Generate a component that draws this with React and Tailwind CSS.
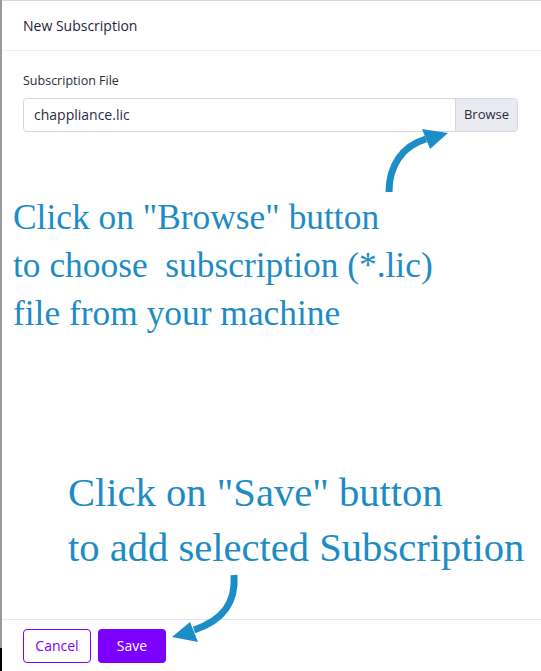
import React from 'react';

const ui = { fontFamily: '"Open Sans", "Noto Sans", sans-serif' };
const note = { fontFamily: '"Liberation Serif", "Times New Roman", serif' };

function ArrowUp() {
  return (
    <svg className="absolute left-[378px] top-[124px]" width="80" height="72" viewBox="0 0 80 72">
      <path d="M11 68 C 11 42, 24 22, 48 15" fill="none" stroke="#1b8ec8" strokeWidth="7" strokeLinecap="butt" />
      <path d="M44 5 L 70 9 L 52 25 Z" fill="#1b8ec8" />
    </svg>
  );
}

function ArrowDown() {
  return (
    <svg className="absolute left-[166px] top-[572px]" width="80" height="76" viewBox="0 0 80 76">
      <path d="M68 3 C 70 30, 58 48, 28 58" fill="none" stroke="#1b8ec8" strokeWidth="7" strokeLinecap="butt" />
      <path d="M6 65 L 24 50 L 32 70 Z" fill="#1b8ec8" />
    </svg>
  );
}

export default function App() {
  return (
    <div className="relative w-[541px] h-[671px] bg-black overflow-hidden">
      <div className="flex flex-col h-full ml-[2px] bg-white border-t border-[#d9d9e0]" style={ui}>
        <div className="h-[50px] shrink-0 flex items-center px-[21px] border-b border-[#eceef2] text-[14px] text-[#1f1d3a]">
          New Subscription
        </div>

        <div className="flex-1 min-h-0 flex flex-col pt-[21px] px-[21px]">
          <label className="text-[12.5px] text-[#2b2a3f] mb-[8px]">Subscription File</label>
          <div className="flex h-[34px] -mt-[1px] border border-[#d5d8de] rounded-[4px] overflow-hidden w-[495px]">
            <div className="flex-1 flex items-center px-[10px] text-[14px] text-[#2b2a3f]">chappliance.lic</div>
            <div className="w-[62px] flex items-center justify-center bg-[#e9ebf0] border-l border-[#d5d8de] text-[13px] text-[#2b2a3f]">
              Browse
            </div>
          </div>

          <div className="mt-[61px] -ml-[10px] whitespace-pre text-[35.4px] leading-[48px] text-[#1e8cc4]" style={note}>
            <div>Click on "Browse" button</div>
            <div>to choose  subscription (*.lic)</div>
            <div>file from your machine</div>
          </div>

          <div className="mt-[128px] ml-[45px] whitespace-pre text-[40.6px] leading-[55px] text-[#1e8cc4]" style={note}>
            <div>Click on "Save" button</div>
            <div>to add selected Subscription</div>
          </div>
        </div>

        <div className="h-[52px] shrink-0 flex items-center gap-[7px] px-[21px] border-t border-[#e6e8ec]">
          <button className="h-[34px] w-[68px] rounded-[4px] border border-[#7b00ff] text-[#7b00ff] text-[14px] bg-white">
            Cancel
          </button>
          <button className="h-[34px] w-[68px] rounded-[4px] bg-[#7b00ff] text-white text-[14px]">
            Save
          </button>
        </div>
      </div>
      <div className="absolute left-0 top-0 w-[2px] h-[648px] bg-[#9a9a9a]" />
      <ArrowUp />
      <ArrowDown />
    </div>
  );
}
